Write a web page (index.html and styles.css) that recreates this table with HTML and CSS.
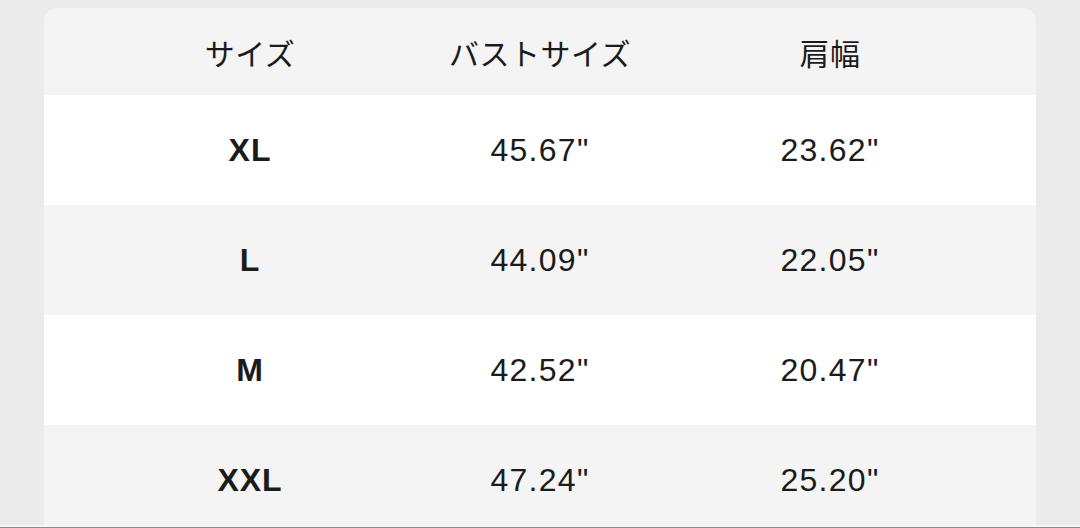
FILE: index.html
```html
<!DOCTYPE html>
<html lang="ja">
<head>
<meta charset="utf-8">
<title>サイズ表</title>
<link rel="stylesheet" href="styles.css">
</head>
<body>
<div class="page">
  <div class="card">
    <div class="row head">
      <div class="cell">サイズ</div>
      <div class="cell">バストサイズ</div>
      <div class="cell">肩幅</div>
    </div>
    <div class="row">
      <div class="cell size">XL</div>
      <div class="cell">45.67"</div>
      <div class="cell">23.62"</div>
    </div>
    <div class="row alt">
      <div class="cell size">L</div>
      <div class="cell">44.09"</div>
      <div class="cell">22.05"</div>
    </div>
    <div class="row">
      <div class="cell size">M</div>
      <div class="cell">42.52"</div>
      <div class="cell">20.47"</div>
    </div>
    <div class="row alt">
      <div class="cell size">XXL</div>
      <div class="cell">47.24"</div>
      <div class="cell">25.20"</div>
    </div>
  </div>
  <div class="edge"></div>
</div>
</body>
</html>
```
FILE: styles.css
```css
html, body {
  margin: 0;
  padding: 0;
  background: #ebebeb;
}
.page {
  height: 528px;
  display: flex;
  flex-direction: column;
  overflow: hidden;
  padding-top: 8px;
  box-sizing: border-box;
}
.card {
  flex: 1;
  margin: 0 44px;
  background: #f4f4f4;
  border-radius: 14px 14px 0 0;
  overflow: hidden;
  color: #1b1b1b;
  font-family: "Liberation Sans", "Noto Sans CJK JP", sans-serif;
}
.row {
  display: grid;
  grid-template-columns: repeat(3, 1fr);
  padding: 0 61px;
  height: 110px;
  align-items: center;
  background: #ffffff;
  font-size: 32px;
  letter-spacing: 1.3px;
}
.row.alt {
  background: #f4f4f4;
}
.row.head {
  height: 87px;
  background: #f4f4f4;
  font-family: "Noto Sans CJK JP", sans-serif;
  font-size: 30px;
  letter-spacing: 0.5px;
}
.cell {
  text-align: center;
  line-height: 1;
}
.size {
  font-weight: bold;
  letter-spacing: 1px;
}
.edge {
  height: 3px;
  background: #f7f7f7;
  border-bottom: 1px solid #8c8c8c;
  box-sizing: border-box;
}
```
